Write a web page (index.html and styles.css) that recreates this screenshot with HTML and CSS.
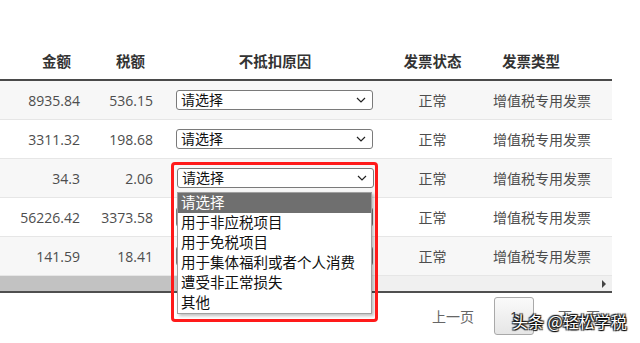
FILE: index.html
```html
<!DOCTYPE html>
<html lang="zh-CN">
<head>
<meta charset="utf-8">
<title>发票列表</title>
<link rel="stylesheet" href="styles.css">
</head>
<body>
<div class="page">
  <div class="table">
    <div class="row head">
      <div class="c c1">金额</div>
      <div class="c c2">税额</div>
      <div class="c c3">不抵扣原因</div>
      <div class="c c4">发票状态</div>
      <div class="c c5">发票类型</div>
    </div>
    <div class="row odd">
      <div class="c c1">8935.84</div>
      <div class="c c2">536.15</div>
      <div class="c c3"><div class="select"><span>请选择</span><svg class="chev" width="10" height="6" viewBox="0 0 10 6"><path d="M1 1 L5 5 L9 1" fill="none" stroke="#222" stroke-width="1.2"/></svg></div></div>
      <div class="c c4">正常</div>
      <div class="c c5">增值税专用发票</div>
    </div>
    <div class="row">
      <div class="c c1">3311.32</div>
      <div class="c c2">198.68</div>
      <div class="c c3"><div class="select"><span>请选择</span><svg class="chev" width="10" height="6" viewBox="0 0 10 6"><path d="M1 1 L5 5 L9 1" fill="none" stroke="#222" stroke-width="1.2"/></svg></div></div>
      <div class="c c4">正常</div>
      <div class="c c5">增值税专用发票</div>
    </div>
    <div class="row odd">
      <div class="c c1">34.3</div>
      <div class="c c2">2.06</div>
      <div class="c c3 open">
        <div class="select"><span>请选择</span><svg class="chev" width="10" height="6" viewBox="0 0 10 6"><path d="M1 1 L5 5 L9 1" fill="none" stroke="#222" stroke-width="1.2"/></svg></div>
        <div class="listbox">
          <div class="opt sel">请选择</div>
          <div class="opt">用于非应税项目</div>
          <div class="opt">用于免税项目</div>
          <div class="opt">用于集体福利或者个人消费</div>
          <div class="opt">遭受非正常损失</div>
          <div class="opt">其他</div>
        </div>
        <div class="redframe"></div>
      </div>
      <div class="c c4">正常</div>
      <div class="c c5">增值税专用发票</div>
    </div>
    <div class="row">
      <div class="c c1">56226.42</div>
      <div class="c c2">3373.58</div>
      <div class="c c3"><div class="select"><span>请选择</span><svg class="chev" width="10" height="6" viewBox="0 0 10 6"><path d="M1 1 L5 5 L9 1" fill="none" stroke="#222" stroke-width="1.2"/></svg></div></div>
      <div class="c c4">正常</div>
      <div class="c c5">增值税专用发票</div>
    </div>
    <div class="row odd">
      <div class="c c1">141.59</div>
      <div class="c c2">18.41</div>
      <div class="c c3"><div class="select"><span>请选择</span><svg class="chev" width="10" height="6" viewBox="0 0 10 6"><path d="M1 1 L5 5 L9 1" fill="none" stroke="#222" stroke-width="1.2"/></svg></div></div>
      <div class="c c4">正常</div>
      <div class="c c5">增值税专用发票</div>
    </div>
    <div class="hscroll">
      <div class="thumb"></div>
      <div class="arrow"></div>
    </div>
  </div>
  <div class="pager">
    <span class="plink">上一页</span>
    <span class="pbox">1</span>
    <span class="plink next">下一页</span>
  </div>
  <div class="watermark">头条 @轻松学税</div>
</div>
</body>
</html>
```

FILE: styles.css
```css
html, body {
  margin: 0;
  padding: 0;
  background: #ffffff;
}
body {
  font-family: "Open Sans", "Noto Sans CJK SC", sans-serif;
  font-size: 14px;
  color: #4d4d4d;
}
.page {
  position: relative;
  width: 640px;
  height: 343px;
  overflow: hidden;
}
.table {
  width: 612px;
  padding-top: 41px;
}
.row {
  display: grid;
  grid-template-columns: 95px 70px 220px 95px 132px;
  height: 39px;
  box-sizing: border-box;
  border-bottom: 1px solid #e6e6e6;
  align-items: center;
  background: #fff;
}
.row.odd {
  background: #f7f7f7;
}
.row.head {
  height: 40px;
  border-bottom: 2px solid #4a4a4a;
  background: #fff;
  font-weight: bold;
  color: #333;
  font-size: 14.5px;
}
.c {
  white-space: nowrap;
}
.c1 { text-align: right; padding-right: 15px; }
.c2 { text-align: right; padding-right: 12px; }
.head .c1 { padding-right: 24px; }
.head .c2 { padding-right: 20px; }
.c3 { padding-left: 11px; position: relative; height: 100%; display: flex; align-items: center; }
.head .c3 { justify-content: center; padding-left: 0; }
.c4 { text-align: center; }
.c5 { padding-left: 13px; }
.head .c5 { padding-left: 22px; }

.select {
  width: 197px;
  height: 20px;
  box-sizing: border-box;
  border: 1px solid #7a7a7a;
  border-radius: 3px;
  background: #fff;
  display: flex;
  align-items: center;
  justify-content: space-between;
  padding: 0 4px 0 4px;
  color: #111;
  font-size: 14px;
  line-height: 18px;
}
.chev {
  margin-right: 2px;
}
.open .select {
  margin-left: 1px;
}
.listbox {
  position: absolute;
  left: 12px;
  top: 33px;
  width: 195px;
  box-sizing: border-box;
  border: 1px solid #a0a0a0;
  background: #fff;
  box-shadow: 2px 2px 3px rgba(0,0,0,0.25);
  z-index: 10;
}
.opt {
  height: 20px;
  line-height: 20px;
  padding-left: 3px;
  font-size: 14.5px;
  color: #111;
}
.opt.sel {
  background: #6f6f6f;
  color: #fff;
}
.redframe {
  position: absolute;
  left: 6px;
  top: 3px;
  width: 207px;
  height: 160px;
  box-sizing: border-box;
  border: 3px solid #ff1a1a;
  border-radius: 4px;
  z-index: 11;
}

.hscroll {
  position: relative;
  height: 15px;
  background: #f0f0f0;
  border-bottom: 2px solid #4f4f4f;
}
.thumb {
  width: 300px;
  height: 15px;
  background: #c2c2c2;
}
.arrow {
  position: absolute;
  right: 6px;
  top: 4px;
  width: 0;
  height: 0;
  border-top: 4px solid transparent;
  border-bottom: 4px solid transparent;
  border-left: 4px solid #444;
}

.pager {
  width: 612px;
  display: flex;
  justify-content: flex-end;
  align-items: center;
  margin-top: 4px;
  height: 38px;
  box-sizing: border-box;
  padding-right: 12px;
  font-family: "Noto Sans CJK SC", sans-serif;
}
.plink {
  color: #666;
  font-size: 14px;
}
.pbox {
  width: 40px;
  height: 38px;
  box-sizing: border-box;
  margin: 0 24px 0 20px;
  border: 1px solid #a9a9a9;
  border-radius: 3px;
  background: linear-gradient(#fafafa, #e6e6e6);
  display: flex;
  align-items: center;
  justify-content: center;
  color: #333;
  font-family: "Open Sans", sans-serif;
  font-size: 14px;
}
.watermark {
  position: absolute;
  left: 512px;
  top: 309px;
  font-family: "Noto Sans CJK SC", sans-serif;
  font-size: 16px;
  color: #fff;
  white-space: nowrap;
  text-shadow: 0 0 1px #000, 1px 1px 1px #000, -1px -1px 1px #222, 1px -1px 1px #222, -1px 1px 1px #222;
  z-index: 20;
}
```
